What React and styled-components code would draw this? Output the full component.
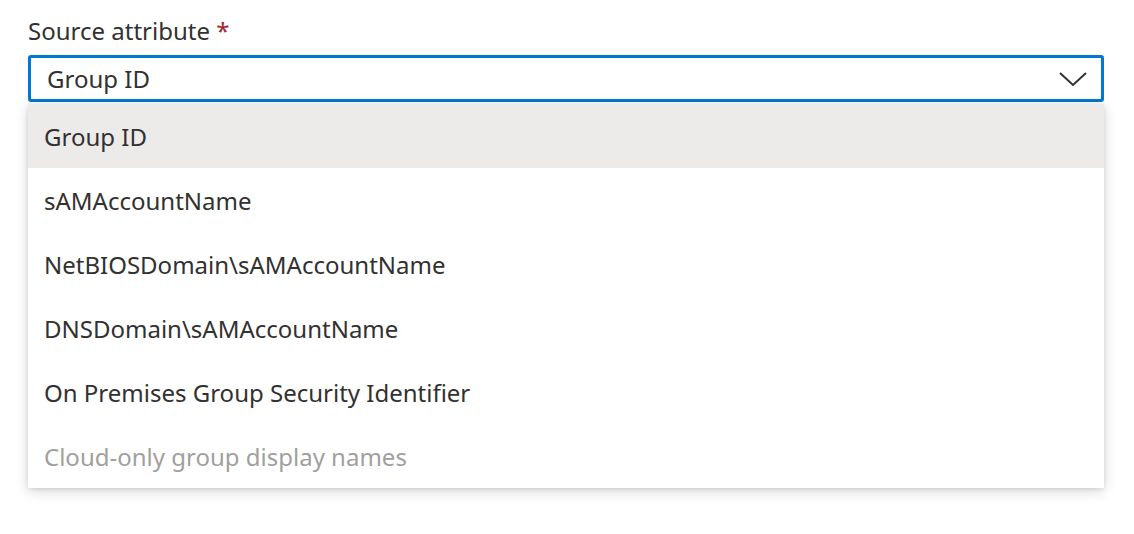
import styled, { createGlobalStyle } from 'styled-components'

const Global = createGlobalStyle`
  body { margin: 0; background: #fff; font-family: 'Noto Sans', 'Open Sans', sans-serif; color: #323130; }
`

const options = [
  { label: 'Group ID', selected: true },
  { label: 'sAMAccountName' },
  { label: 'NetBIOSDomain\\sAMAccountName' },
  { label: 'DNSDomain\\sAMAccountName' },
  { label: 'On Premises Group Security Identifier' },
  { label: 'Cloud-only group display names', disabled: true },
]

const App = () => (
  <Page>
    <Global />
    <Label>Source attribute <Star>*</Star></Label>
    <Select>
      <span>Group ID</span>
      <svg width="28" height="16" viewBox="0 0 28 16">
        <path d="M1 2 L14 14 L27 2" fill="none" stroke="#323130" strokeWidth="2" />
      </svg>
    </Select>
    <Menu>
      {options.map(o => (
        <Option key={o.label} $selected={o.selected} $disabled={o.disabled}>{o.label}</Option>
      ))}
    </Menu>
  </Page>
)

const Page = styled.div`
  padding: 14px 30px 40px 28px;
  width: 1076px;
`

const Label = styled.div`
  font-size: 24px;
  line-height: 34px;
  margin-bottom: 7px;
`

const Star = styled.span`
  color: #a4262c;
`

const Select = styled.div`
  height: 47px;
  box-sizing: border-box;
  border: 3px solid #0078d4;
  border-radius: 3px;
  display: flex;
  align-items: center;
  justify-content: space-between;
  padding: 0 14px 0 16px;
  font-size: 24px;
`

const Menu = styled.div`
  margin-top: 2px;
  box-shadow: 0 3px 14px rgba(0, 0, 0, 0.16), 0 1px 4px rgba(0, 0, 0, 0.1);
  background: #fff;
  border-radius: 2px;
`

const Option = styled.div`
  height: 64px;
  display: flex;
  align-items: center;
  padding-left: 16px;
  font-size: 24px;
  background: ${p => (p.$selected ? '#edebe9' : '#fff')};
  color: ${p => (p.$disabled ? '#a19f9d' : '#323130')};
`

export default App
